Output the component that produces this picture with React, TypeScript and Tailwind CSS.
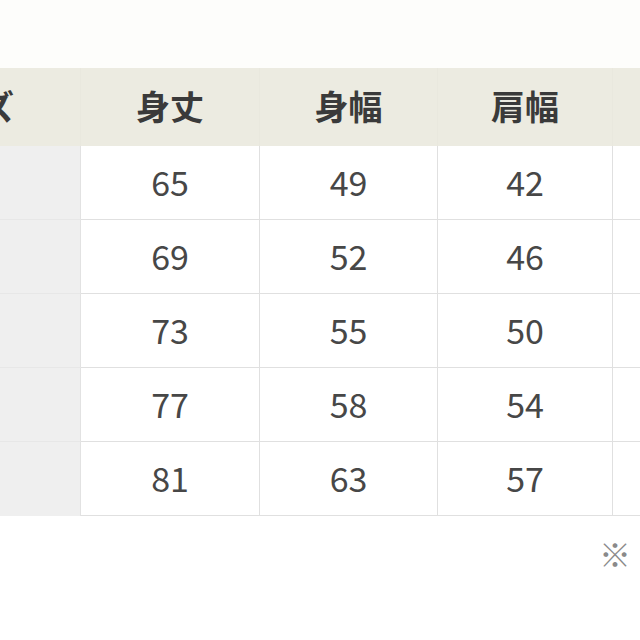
import React from "react"

const rows = [
  ["65", "49", "42"],
  ["69", "52", "46"],
  ["73", "55", "50"],
  ["77", "58", "54"],
  ["81", "63", "57"],
]

const font = { fontFamily: '"Noto Sans CJK JP", "Noto Sans", sans-serif' }

export default function App() {
  return (
    <div className="w-[640px] h-[640px] overflow-hidden bg-white" style={font}>
      <div className="h-[68px] bg-[#fdfdfb]" />
      <div className="-ml-[153px] w-[950px]">
        {/* header */}
        <div className="grid grid-cols-[234px_179px_178px_175px_184px] h-[78px] bg-[#ecebe1] text-[34px] font-bold text-[#3a3a3a]">
          <div className="flex items-center justify-center pb-1 border-r border-[#e9e8de]">サイズ</div>
          <div className="flex items-center justify-center pb-1 border-r border-[#e9e8de]">身丈</div>
          <div className="flex items-center justify-center pb-1 border-r border-[#e9e8de]">身幅</div>
          <div className="flex items-center justify-center pb-1 border-r border-[#e9e8de]">肩幅</div>
          <div className="flex items-center justify-center pb-1">袖丈</div>
        </div>
        {/* body */}
        {rows.map((r, i) => (
          <div
            key={i}
            className="grid grid-cols-[234px_179px_178px_175px_184px] h-[74px] text-[34px] text-[#474747]"
          >
            <div className={`bg-[#efefef] border-r border-[#e2e2e2] ${i < rows.length - 1 ? "border-b border-b-[#e7e7e7]" : ""}`} />
            {r.map((v, j) => (
              <div
                key={j}
                className="flex items-center justify-center border-r border-b border-[#e0e0e0] pb-0.5"
              >
                {v}
              </div>
            ))}
            <div className="border-b border-[#e0e0e0]" />
          </div>
        ))}
      </div>
      <div className="pl-[599px] pt-[21px] whitespace-nowrap text-[32px] leading-none text-[#8a8a8a]">
        ※
      </div>
    </div>
  )
}
